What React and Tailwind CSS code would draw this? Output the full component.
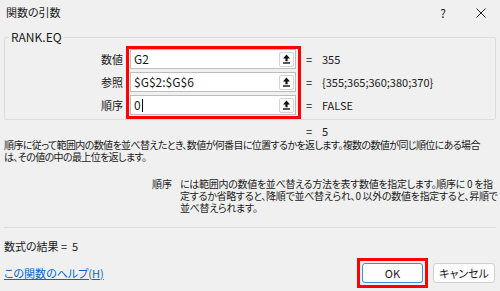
import React from "react";

const rows = [
  { label: "数値", value: "G2", result: "355" },
  { label: "参照", value: "$G$2:$G$6", result: "{355;365;360;380;370}" },
  { label: "順序", value: "0", result: "FALSE", caret: true },
];

const UpButton = () => (
  <span className="flex h-[15px] w-[15px] items-center justify-center rounded-[2px] border border-[#d4d4d4] bg-white">
    <svg width="9" height="10" viewBox="0 0 9 10">
      <path d="M4.5 0.6 L8 4.4 H5.6 V7.2 H3.4 V4.4 H1 Z" fill="#111" />
      <rect x="1" y="8.3" width="7" height="1.4" fill="#111" />
    </svg>
  </span>
);

export default function App() {
  return (
    <div className="relative h-[291px] w-[500px] overflow-hidden bg-[#f0f0f0] font-['Noto_Sans_CJK_JP',sans-serif] text-[#1a1a1a] [font-feature-settings:'palt']">
      {/* Title bar */}
      <div className="flex h-[25px] items-center justify-between pl-[6px] pr-[14px] text-[11px]">
        <span>関数の引数</span>
        <div className="flex items-center gap-[30px]">
          <span className="text-[12px]">?</span>
          <svg width="10" height="10" viewBox="0 0 10 10">
            <path d="M0.5 0.5 L9.5 9.5 M9.5 0.5 L0.5 9.5" stroke="#222" strokeWidth="1" />
          </svg>
        </div>
      </div>

      {/* Arguments */}
      <fieldset className="mx-[4px] mt-[4px] rounded-[2px] border border-[#dcdcdc]">
        <legend className="ml-[4px] px-[2px] text-[12px] leading-[16px]">RANK.EQ</legend>
        <div className="mt-[1px] flex">
          <div className="flex w-[118px] flex-col gap-[3px] pt-[3px]">
            {rows.map((r) => (
              <div key={r.label} className="flex h-[20px] items-center justify-end text-[11px]">
                {r.label}
              </div>
            ))}
          </div>
          <div className="ml-[3px] flex w-[175px] flex-col gap-[3px] border-[3px] border-[#ff0000] pb-px pl-px pr-[2px]">
            {rows.map((r) => (
              <div
                key={r.label}
                className="flex h-[20px] items-center justify-between border border-[#bdbdbd] bg-white pl-[3px] pr-[1px] text-[12px]"
              >
                <span className="flex items-center">
                  {r.value}
                  {r.caret && <span className="ml-px h-[13px] w-px bg-black" />}
                </span>
                <UpButton />
              </div>
            ))}
          </div>
          <div className="ml-[5px] flex flex-col gap-[3px] pt-[3px] text-[11px]">
            {rows.map((r) => (
              <div key={r.label} className="flex h-[20px] items-center">
                <span className="w-[16px]">=</span>
                <span>{r.result}</span>
              </div>
            ))}
          </div>
        </div>
      </fieldset>

      <div className="ml-[306px] mt-[4px] flex h-[14px] items-center text-[11px]">
        <span className="w-[16px]">=</span>
        <span>5</span>
      </div>

      {/* Function description */}
      <p className="mt-[1px] px-[4px] text-[10px] leading-[12px] tracking-[-0.62px] whitespace-nowrap">
        順序に従って範囲内の数値を並べ替えたとき、数値が何番目に位置するかを返します。複数の数値が同じ順位にある場合
        <br />
        は、その値の中の最上位を返します。
      </p>

      <div className="mt-[15px] flex pl-[152px] text-[10px] leading-[12px]">
        <span className="w-[28px] shrink-0 whitespace-nowrap">順序</span>
        <p className="whitespace-nowrap tracking-[-0.3px]">
          には範囲内の数値を並べ替える方法を表す数値を指定します。順序に 0 を指
          <br />
          定するか省略すると、降順で並べ替えられ、0 以外の数値を指定すると、昇順で
          <br />
          並べ替えられます。
        </p>
      </div>

      <div className="mx-[4px] mt-[13px] h-px bg-[#dcdcdc]" />

      <div className="mt-[11px] flex h-[14px] items-center px-[4px] text-[11px]">
        <span>数式の結果 =&nbsp;&nbsp;5</span>
      </div>

      {/* Footer */}
      <div className="mt-[5px] flex items-center justify-between pl-[4px] pr-[5px]">
        <a className="text-[11px] text-[#0066cc] underline">この関数のヘルプ(H)</a>
        <div className="flex items-center gap-[5px]">
          <div className="border-[3px] border-[#ff0000] p-[2px]">
            <button className="flex h-[20px] w-[61px] items-center justify-center rounded-[3px] border border-[#3d8fd8] bg-[#fdfdfd] text-[11px]">
              OK
            </button>
          </div>
          <button className="flex h-[20px] w-[62px] items-center justify-center rounded-[3px] border border-[#d0d0d0] bg-[#fdfdfd] text-[11px]">
            キャンセル
          </button>
        </div>
      </div>
    </div>
  );
}
